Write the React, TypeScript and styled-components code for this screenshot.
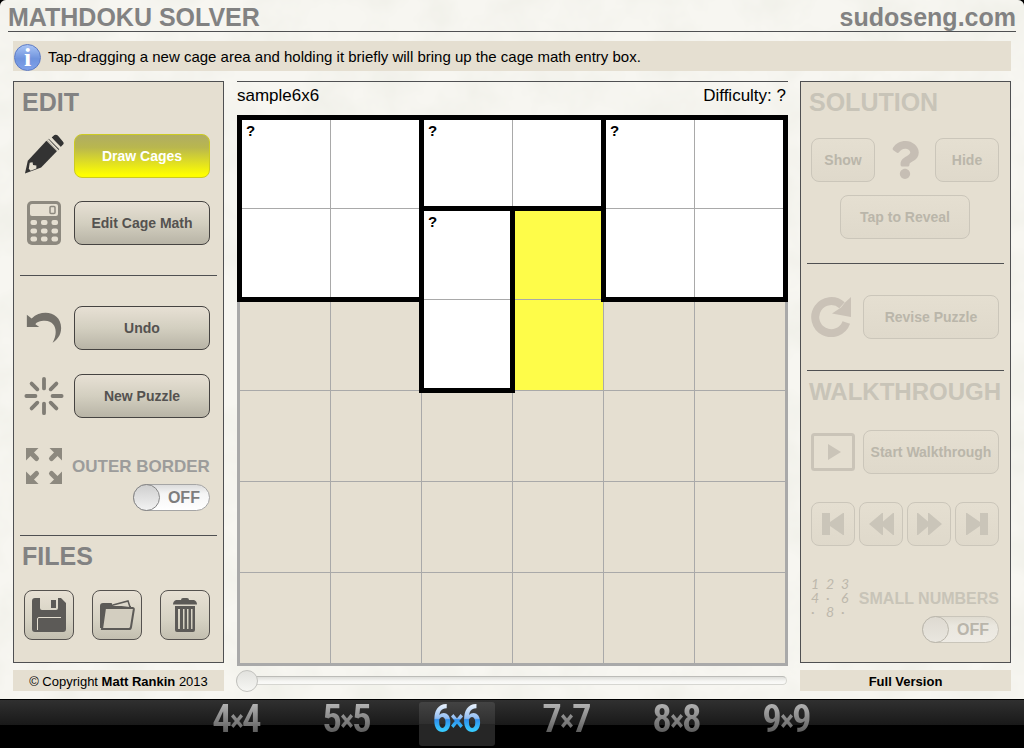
import React, { useState } from "react";
import styled, { createGlobalStyle, css } from "styled-components";
import { FaQuestion } from "react-icons/fa";

const color = {
  panel: "#e5dfd1",
  line: "#4f5052",
  heading: "#828282",
  button: "#545250",
  icon: "#8d897f",
  grid: "#a9a9a9",
};

const GlobalStyle = createGlobalStyle`
  *, *::before { box-sizing: border-box; }
  body {
    margin: 0;
    background: #000;
    color: #000;
    font-family: "Liberation Sans", Arial, sans-serif;
  }
  h1, h2, p { margin: 0; }
  button { font: inherit; }
`;

/* ---------- page frame ---------- */

const Page = styled.div`
  display: flex;
  flex-direction: column;
  min-height: 100vh;
`;

const Paper = styled.div`
  position: relative;
  flex: 1;
  padding-bottom: 8px;
  border-radius: 6px 6px 0 0;
  background: #f7f6f1;
  overflow: hidden;
  isolation: isolate;
`;

const Texture = styled.svg`
  position: absolute;
  inset: 0;
  width: 100%;
  height: 100%;
  z-index: -1;
`;

const Header = styled.header`
  display: flex;
  justify-content: space-between;
  margin: 0 8px;
  padding: 3px 0 0 0;
  border-bottom: 1px solid ${color.line};
  color: ${color.heading};
  font-size: 25px;
  line-height: 28px;
  font-weight: bold;
`;

const Title = styled.h1`
  font: inherit;
`;

const SiteLink = styled.a`
  color: inherit;
  text-decoration: none;
`;

const InfoBar = styled.div`
  display: flex;
  align-items: center;
  gap: 7px;
  min-height: 30px;
  margin: 9px 13px 0;
  padding: 2px 1px 0;
  background: ${color.panel};
  font-size: 15px;
  line-height: 28px;
`;

const InfoBadge = styled.span`
  flex: none;
  width: 27px;
  height: 27px;
  border: 1px solid #5c7ac4;
  border-radius: 50%;
  background: linear-gradient(#a9c4f5, #6f93dd 55%, #7fa2ea);
  color: #fff;
  font: bold 26px/26px "Liberation Serif", serif;
  text-align: center;
`;

const Columns = styled.main`
  display: grid;
  grid-template-columns: 211px minmax(0, 1fr) 211px;
  column-gap: 13px;
  align-items: start;
  margin: 10px 13px 0;
`;

const Column = styled.div`
  display: flex;
  flex-direction: column;
  gap: 7px;
`;

const Center = styled.div`
  margin-right: -1px;
`;

/* ---------- side panels ---------- */

const Panel = styled.aside`
  padding: 0 6px;
  border: 1px solid ${color.line};
  background: ${color.panel};
`;

const Section = styled.section<{ $top: number; $bottom: number; $inset?: string }>`
  padding: ${(p) => p.$top}px ${(p) => p.$inset || "7px"} ${(p) => p.$bottom}px 4px;

  & + & {
    border-top: 1px solid ${color.line};
  }
`;

const Heading = styled.h2<{ $dim?: boolean; $small?: boolean }>`
  margin-left: -2px;
  color: ${(p) => (p.$dim ? "#c8c4b8" : color.heading)};
  font-size: ${(p) => (p.$small ? 24 : 25)}px;
  line-height: 28px;
  white-space: nowrap;
`;

const Row = styled.div<{ $mt?: number; $gap?: number; $align?: string; $justify?: string }>`
  display: flex;
  align-items: ${(p) => p.$align || "center"};
  justify-content: ${(p) => p.$justify || "flex-start"};
  gap: ${(p) => p.$gap ?? 10}px;
  margin-top: ${(p) => p.$mt || 0}px;
`;

const IconSlot = styled.span<{ $width?: number; $color?: string }>`
  display: flex;
  flex: none;
  justify-content: center;
  width: ${(p) => p.$width || 40}px;
  color: ${(p) => p.$color || color.icon};
`;

const faded = css`
  border-color: #cbc6ba;
  background: linear-gradient(#e5dfd1, #dfd9cb);
  color: #bab6aa;
`;

const Button = styled.button<{ $width?: number; $active?: boolean }>`
  display: flex;
  flex: ${(p) => (p.$width ? "none" : 1)};
  align-items: center;
  justify-content: center;
  width: ${(p) => (p.$width ? p.$width + "px" : "auto")};
  height: 44px;
  padding: 0;
  border: 1px solid #454341;
  border-radius: 8px;
  background: linear-gradient(#e7e0d4, #d3cfc0 50%, #b8b4a6);
  color: ${color.button};
  font-size: 14px;
  font-weight: bold;
  white-space: nowrap;

  ${(p) =>
    p.$active &&
    css`
      border-color: #cccb22;
      background: linear-gradient(#b0ad62, #b9b74e 30%, #ffff00 95%);
      color: #fff;
    `}

  &:disabled {
    ${faded}
  }
`;

const FileButton = styled(Button)`
  width: 50px;
  height: 50px;
  flex: none;
  border-color: #55524f;
  background: linear-gradient(#e7e0d4, #d6d2c3 60%, #c3bfb0);
`;

const Option = styled.label<{ $dim?: boolean }>`
  display: flex;
  flex: 1;
  flex-direction: column;
  align-items: flex-end;
  gap: 7px;
  color: ${(p) => (p.$dim ? "#c8c4b8" : "#9c9c9b")};
  font-size: ${(p) => (p.$dim ? 16 : 17)}px;
  line-height: 20px;
  font-weight: bold;
  white-space: nowrap;
`;

const SwitchBox = styled.span`
  display: grid;
  width: 77px;
  height: 27px;
`;

const SwitchInput = styled.input`
  grid-area: 1 / 1;
  appearance: none;
  display: flex;
  width: 100%;
  height: 100%;
  margin: 0;
  border: 1px solid #a5a5a5;
  border-radius: 14px;
  background: linear-gradient(#dcdcdc, #f5f5f5 35%, #fff);

  &::before {
    content: "";
    width: 27px;
    height: 27px;
    margin: -1px;
    border: 1px solid #858585;
    border-radius: 50%;
    background: linear-gradient(#cfcfcf, #f2f2f2);
  }
  &:checked {
    justify-content: flex-end;
  }
  &:disabled {
    border-color: #c9c5ba;
    background: linear-gradient(#dfdbd0, #eae7df 35%, #eeebe4);
  }
  &:disabled::before {
    border-color: #bbb7ac;
    background: linear-gradient(#dedad1, #e9e6df);
  }
`;

const SwitchState = styled.span<{ $on: boolean; $dim?: boolean }>`
  grid-area: 1 / 1;
  align-self: center;
  justify-self: ${(p) => (p.$on ? "start" : "end")};
  padding: 1px 10px 0;
  color: ${(p) => (p.$dim ? "#b9b5ab" : "#7d7d7d")};
  font-size: 16px;
  pointer-events: none;
`;

const NumberSample = styled.span`
  display: grid;
  flex: none;
  grid-template-columns: repeat(3, 15px);
  grid-auto-rows: 14px;
  width: 42px;
  color: #bdb8ac;
  font: italic 14px/14px Lato, sans-serif;
`;

const Note = styled.p`
  min-height: 21px;
  padding-top: 2px;
  background: ${color.panel};
  font-size: 13px;
  line-height: 19px;
  text-align: center;
`;

/* ---------- board ---------- */

const BoardCaption = styled.div`
  display: flex;
  justify-content: space-between;
  padding: 4px 2px 10px 0;
  border-top: 1px solid ${color.line};
  font-size: 17px;
  line-height: 19px;
`;

const Board = styled.div`
  display: grid;
  grid-template: repeat(6, minmax(0, 1fr)) / repeat(6, minmax(0, 1fr));
  aspect-ratio: 1;
  border: solid ${color.grid};
  border-width: 2px 3px 3px 2px;
`;

const Cell = styled.div<{ $r: number; $c: number; $fill: string }>`
  grid-area: ${(p) => p.$r} / ${(p) => p.$c};
  border: solid ${color.grid};
  border-width: 1px 0 0 1px;
  background: ${(p) => p.$fill};
`;

const Cage = styled.div<{ $area: string }>`
  grid-area: ${(p) => p.$area};
  margin: -2px -3px -3px -2px;
  padding: 2px 4px;
  border: 5px solid #000;
  font-size: 15px;
  line-height: 17px;
  font-weight: bold;
`;

const Slider = styled.input`
  appearance: none;
  display: block;
  width: 100%;
  height: 21px;
  margin: 4px 0 0 -1px;
  background: transparent;

  &::-webkit-slider-runnable-track {
    height: 9px;
    border: 1px solid #d6d6d1;
    border-top-color: #bcbcb8;
    border-radius: 5px;
    background: linear-gradient(#dededa, #f6f6f3 60%, #fafaf8);
  }
  &::-webkit-slider-thumb {
    appearance: none;
    width: 22px;
    height: 22px;
    margin: -7px 0 0 -1px;
    border: 1px solid #c2c2be;
    border-radius: 50%;
    background: linear-gradient(#e2e2de, #f6f6f3);
  }
`;

/* ---------- size tabs ---------- */

const TabBar = styled.nav`
  display: flex;
  justify-content: center;
  height: 49px;
  padding-top: 2px;
  border-top: 1px solid #000;
  background: linear-gradient(#303030, #191919 25px, #000 25px);
`;

const TabSlot = styled.div`
  display: flex;
  justify-content: center;
  width: 110px;
`;

const Tab = styled.button<{ $on: boolean }>`
  display: flex;
  justify-content: center;
  width: 76px;
  height: 44px;
  padding: 0;
  border: 0;
  border-radius: 3px;
  background: ${(p) => (p.$on ? "linear-gradient(#434343, #2f2f2f 22px, #262626 22px)" : "none")};
`;

const TabText = styled.span<{ $on: boolean }>`
  display: flex;
  align-items: center;
  height: 34px;
  background: ${(p) =>
    p.$on
      ? "linear-gradient(#e4effc 10%, #8fbcf3 48%, #2f8fec 52%, #38ccff 85%)"
      : "linear-gradient(#b4b4b4 5%, #5c5c5c 90%)"};
  background-clip: text;
  -webkit-background-clip: text;
  color: transparent;
  font-family: "Roboto Condensed", "Open Sans Condensed", Roboto, sans-serif;
  font-size: 39px;
  font-weight: 600;
`;

const Times = styled.span`
  margin: 0 -2px;
  padding-top: 3px;
  font-size: 30px;
  line-height: 31px;
  font-weight: bold;
`;

/* ---------- icons ---------- */

const Pencil = () => (
  <svg width="42" height="44" viewBox="0 0 42 44" fill="#333">
    <path d="M23.5 6 34.5 17 18 34 1 40.5 4 27Z" />
    <path d="m26 3.8 11 11-2 2L24 5.8Z" />
    <path d="M29 2.5 32 0q2-.7 3.500.5l5.500 6.500q1.300 1.500 0 3l-3 3Z" />
    <path d="m24.500 4.500 11.500 12M27.500 2.500 39 14" stroke={color.panel} strokeWidth="1.700" />
    <path d="m6 29 3-.5.500 3 3.500.5v3l-6 2.500-2-2Z" fill={color.panel} />
  </svg>
);

const Calculator = () => (
  <svg width="34" height="44" viewBox="0 0 34 44">
    <rect width="34" height="44" rx="5" fill="currentColor" />
    <rect x="3" y="3" width="28" height="12" rx="2" fill={color.panel} />
    <rect x="23" y="5.500" width="5" height="7" rx="1" fill="none" stroke="currentColor" strokeWidth="1.500" />
    {[19, 27.5, 35.5].map((y) =>
      [3.500, 14, 24.500].map((x) => (
        <rect key={x + "-" + y} x={x} y={y} width="6.500" height="5" rx="2" fill={color.panel} />
      ))
    )}
  </svg>
);

const UndoArrow = () => (
  <svg width="42" height="34" viewBox="0 0 42 34" fill="#74716a">
    <path d="M3 3 8 7C20-4 39 1 39 17c0 8-5 13-9 15.500C36 22 34 10 22 9.500c-5 0-9 1.500-10 3.500l4 3H3Z" />
  </svg>
);

const Burst = () => (
  <svg width="42" height="42" viewBox="0 0 42 42" stroke="#807d75" strokeWidth="4" strokeLinecap="round">
    <path d="M21 3v10M21 29v10M2.500 21H12M30 21h9.500M8 8l6 6M28 28l6 6M34 8l-6 6M14 28l-6 6" />
  </svg>
);

const Expand = () => (
  <svg width="36" height="36" viewBox="0 0 36 36" fill="currentColor">
    {[0, 90, 180, 270].map((a) => (
      <g key={a} transform={`rotate(${a} 18 18)`}>
        <path d="M0 0h12.500L0 12.500Z" />
        <path d="m4 4 6.500 6.500" stroke="currentColor" strokeWidth="5" strokeLinecap="round" />
      </g>
    ))}
  </svg>
);

const Floppy = () => (
  <svg width="34" height="34" viewBox="0 0 34 34" fill="#5c5a57">
    <path
      fillRule="evenodd"
      d="M3 0h5v10q0 2 2 2h14q2 0 2-2V0h3l5 5v26q0 3-3 3H3q-3 0-3-3V3q0-3 3-3Z"
    />
    <path d="M19 2h5v8h-5Z" />
    <path d="M5.500 32V21q0-1.500 1.500-1.500h22" fill="none" stroke={color.panel} />
  </svg>
);

const Folder = () => (
  <svg width="36" height="30" viewBox="0 0 36 30" fill="none" stroke="#5c5a57" strokeWidth="2">
    <path d="M2 28V6q0-2 2-2h8l2 3h17v2" fill="#5c5a57" />
    <path d="m14 5 15-4 2 6" fill="#dcd7ca" strokeWidth="1.500" />
    <path d="M6 8h27.500q1.500 0 1.300 1.500L32 27q-.3 2-2 2H3Z" fill="#d3cec0" />
  </svg>
);

const Trash = () => (
  <svg width="24" height="34" viewBox="0 0 24 34" fill="#5c5a57">
    <path d="M8 2q0-2 2-2h4q2 0 2 2h5q3 1 3 4.500H0Q0 3 3 2Z" />
    <path fillRule="evenodd" d="M2 8h20v24q0 2-2 2H4q-2 0-2-2Zm3 3v20h2V11Zm5 0v20h1.500V11Zm4 0v20h1.500V11Zm4 0v20h1.500V11Z" />
  </svg>
);

const Revise = () => (
  <svg width="40" height="40" viewBox="0 0 40 40" fill="#cac2b7">
    <path d="M35.300 25.500A16 16 0 1 1 31 8.300" fill="none" stroke="#cac2b7" strokeWidth="8" />
    <path d="M40 0v20l-19-3.500 9-6 4-5Z" />
  </svg>
);

const PlayFrame = () => (
  <svg width="44" height="38" viewBox="0 0 44 38" fill="#cac4b8">
    <rect x="1.500" y="1.500" width="41" height="35" rx="2" fill="none" stroke="#cac4b8" strokeWidth="3" />
    <path d="M17 11v16l13-8Z" />
  </svg>
);

const transport: { label: string; width: number; d: string }[] = [
  { label: "First step", width: 22, d: "M0 0h8v9L21 0h1v22h-1L8 13v9H0Z" },
  { label: "Step back", width: 25, d: "M0 11 13 0h1v8.500L24 0h1v22h-1l-10-8.500V22h-1Z" },
  { label: "Step forward", width: 25, d: "M25 11 12 0h-1v8.500L1 0H0v22h1l10-8.500V22h1Z" },
  { label: "Last step", width: 22, d: "M22 0h-8v9L1 0H0v22h1l13-9v9h8Z" },
];

/* ---------- data ---------- */

const cages = ["1 / 1 / 3 / 3", "1 / 3 / 2 / 5", "1 / 5 / 3 / 7", "2 / 3 / 4 / 4"];
const sizes = [4, 5, 6, 7, 8, 9];

/* w = inside a cage, y = being dragged over, . = free */
const fills = ["wwwwww", "wwwyww", "..wy..", "......", "......", "......"];
const fillColor: Record<string, string> = { w: "#fff", y: "#fefc49", ".": color.panel };

function Toggle({ label, disabled }: { label: string; disabled?: boolean }) {
  const [on, setOn] = useState(false);
  return (
    <Option $dim={disabled}>
      {label}
      <SwitchBox>
        <SwitchInput
          type="checkbox"
          role="switch"
          disabled={disabled}
          checked={on}
          onChange={(e) => setOn(e.target.checked)}
        />
        <SwitchState $on={on} $dim={disabled}>
          {on ? "ON" : "OFF"}
        </SwitchState>
      </SwitchBox>
    </Option>
  );
}

export default function App() {
  const [size, setSize] = useState(6);

  return (
    <Page>
      <GlobalStyle />
      <Paper>
        <Texture aria-hidden="true">
          <filter id="paper" x="0" y="0" width="100%" height="100%">
            <feTurbulence type="fractalNoise" baseFrequency="0.02" numOctaves="4" seed="8" />
            <feColorMatrix values="0 0 0 0 0.86  0 0 0 0 0.86  0 0 0 0 0.8  1.6 0 0 0 -0.55" />
          </filter>
          <rect width="100%" height="100%" filter="url(#paper)" />
        </Texture>

        <Header>
          <Title>MATHDOKU SOLVER</Title>
          <SiteLink href="#site">sudoseng.com</SiteLink>
        </Header>

        <InfoBar>
          <InfoBadge aria-hidden="true">i</InfoBadge>
          <p>Tap-dragging a new cage area and holding it briefly will bring up the cage math entry box.</p>
        </InfoBar>

        <Columns>
          <Column>
            <Panel>
              <Section $top={6} $bottom={30}>
                <Heading>EDIT</Heading>
                <Row $mt={18}>
                  <IconSlot><Pencil /></IconSlot>
                  <Button $active>Draw Cages</Button>
                </Row>
                <Row $mt={23}>
                  <IconSlot><Calculator /></IconSlot>
                  <Button>Edit Cage Math</Button>
                </Row>
              </Section>
              <Section $top={30} $bottom={24}>
                <Row>
                  <IconSlot><UndoArrow /></IconSlot>
                  <Button>Undo</Button>
                </Row>
                <Row $mt={24}>
                  <IconSlot><Burst /></IconSlot>
                  <Button>New Puzzle</Button>
                </Row>
                <Row $mt={30} $gap={8} $align="flex-start">
                  <IconSlot><Expand /></IconSlot>
                  <Row $mt={9}>
                    <Toggle label="OUTER BORDER" />
                  </Row>
                </Row>
              </Section>
              <Section $top={6} $bottom={22}>
                <Heading>FILES</Heading>
                <Row $mt={20} $gap={0} $justify="space-between">
                  <FileButton aria-label="Save"><Floppy /></FileButton>
                  <FileButton aria-label="Open"><Folder /></FileButton>
                  <FileButton aria-label="Delete"><Trash /></FileButton>
                </Row>
              </Section>
            </Panel>
            <Note>© Copyright <b>Matt Rankin</b> 2013</Note>
          </Column>

          <Center>
            <BoardCaption>
              <span>sample6x6</span>
              <span>Difficulty: ?</span>
            </BoardCaption>
            <Board>
              {fills.map((row, r) =>
                row.split("").map((f, c) => (
                  <Cell key={r + "-" + c} $r={r + 1} $c={c + 1} $fill={fillColor[f]} />
                ))
              )}
              {cages.map((area) => (
                <Cage key={area} $area={area}>?</Cage>
              ))}
            </Board>
            <Slider type="range" min="0" max="100" defaultValue="0" aria-label="Walkthrough position" />
          </Center>

          <Column>
            <Panel>
              <Section $top={6} $bottom={24} $inset="5px">
                <Heading $dim>SOLUTION</Heading>
                <Row $mt={22} $gap={0} $justify="space-between">
                  <Button $width={64} disabled>Show</Button>
                  <IconSlot $color="#c6beb4"><FaQuestion size={38} /></IconSlot>
                  <Button $width={64} disabled>Hide</Button>
                </Row>
                <Row $mt={13} $justify="center">
                  <Button $width={130} disabled>Tap to Reveal</Button>
                </Row>
              </Section>
              <Section $top={31} $bottom={31} $inset="5px">
                <Row $gap={12}>
                  <IconSlot><Revise /></IconSlot>
                  <Button disabled>Revise Puzzle</Button>
                </Row>
              </Section>
              <Section $top={7} $bottom={19} $inset="5px">
                <Heading $dim $small>WALKTHROUGH</Heading>
                <Row $mt={24} $gap={8}>
                  <IconSlot $width={44}><PlayFrame /></IconSlot>
                  <Button disabled>Start Walkthrough</Button>
                </Row>
                <Row $mt={28} $gap={0} $justify="space-between">
                  {transport.map((t) => (
                    <Button key={t.label} $width={44} disabled aria-label={t.label}>
                      <svg width={t.width} height="22" viewBox={`0 0 ${t.width} 22`} fill="#cac5b9">
                        <path d={t.d} />
                      </svg>
                    </Button>
                  ))}
                </Row>
                <Row $mt={31} $gap={0} $align="flex-start" $justify="space-between">
                  <NumberSample aria-hidden="true">
                    {["1", "2", "3", "4", "·", "6", "·", "8", "·"].map((n, i) => (
                      <span key={i}>{n}</span>
                    ))}
                  </NumberSample>
                  <Row $mt={12}>
                    <Toggle label="SMALL NUMBERS" disabled />
                  </Row>
                </Row>
              </Section>
            </Panel>
            <Note><b>Full Version</b></Note>
          </Column>
        </Columns>
      </Paper>

      <TabBar>
        {sizes.map((n) => (
          <TabSlot key={n}>
            <Tab $on={n === size} onClick={() => setSize(n)}>
              <TabText $on={n === size}>
                {n}
                <Times>×</Times>
                {n}
              </TabText>
            </Tab>
          </TabSlot>
        ))}
      </TabBar>
    </Page>
  );
}
